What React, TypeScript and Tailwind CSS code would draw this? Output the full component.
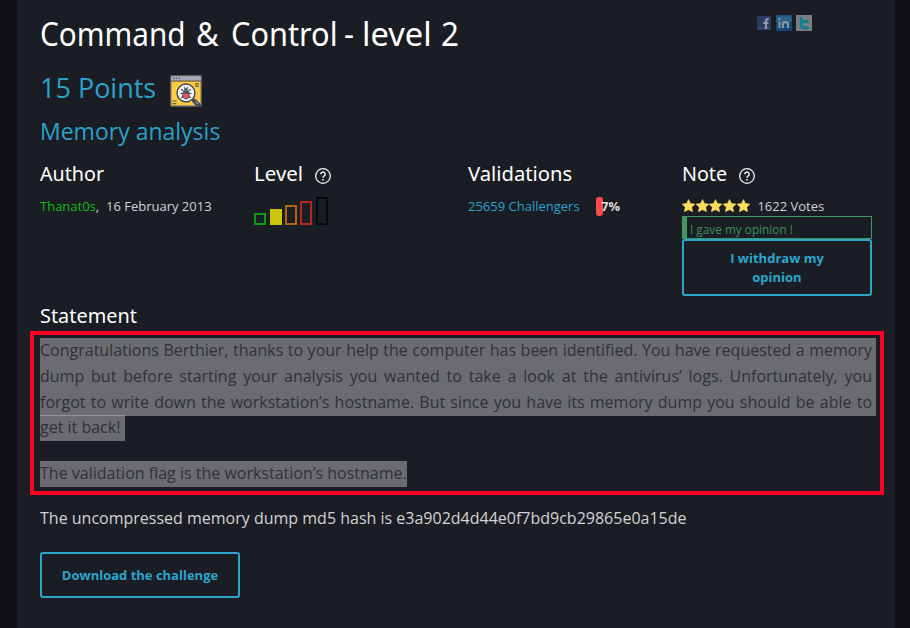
import type { ReactNode } from "react";

function Heading({ children, scale }: { children: string; scale: string }) {
  return <h4 className={`origin-left whitespace-nowrap font-['Noto_Sans'] text-[20.5px] leading-[42px] text-white ${scale}`}>{children}</h4>;
}

function HelpIcon() {
  return (
    <svg width="16" height="16" viewBox="0 0 16 16" fill="none" stroke="#f2f2f2" className="mt-1.5 shrink-0">
      <circle cx="8" cy="8" r="7.3" strokeWidth="1.3" />
      <path d="M5.8 6.3a2.2 2.1 0 1 1 3.5 1.6C8.4 8.4 8 8.7 8 9.8" strokeWidth="1.5" />
      <path d="M8 10.9v1.5" strokeWidth="1.6" />
    </svg>
  );
}

function Star() {
  return (
    <svg width="13.7" height="14" viewBox="0 0 13.7 14" fill="#fbdc5c" className="shrink-0">
      <path d="M6.5.4 8.5 4.5 13 5.1 9.8 8.3 10.6 12.8 6.5 10.7 2.4 12.8 3.2 8.3 0 5.1 4.5 4.5Z" stroke="#fbdc5c" strokeWidth=".5" strokeLinejoin="round" />
    </svg>
  );
}

function BugIcon() {
  return (
    <svg width="32" height="32" viewBox="0 0 32 32" fill="none">
      <rect x=".7" y=".7" width="30.6" height="30.6" rx=".7" fill="#fccb42" stroke="#555866" strokeWidth="1.4" />
      <path d="M1.4 1.4h29.2v4H1.4Z" fill="#a4abbd" />
      <path d="M1 6h30" stroke="#555866" strokeWidth="1.2" />
      <path d="M3 3.1h1.4M5.8 3.1h1.4M8.6 3.1H10" stroke="#4b4f5d" strokeWidth="1.4" />
      <path d="M25 8.8h4M25 11.2h4M2.5 26h4M2.5 28.6h4" stroke="#6b5b43" strokeWidth="1.2" />
      <path d="m22.5 24.5 2 1.8" stroke="#50596a" strokeWidth="2" />
      <path d="m24.5 26.2 4.2 4" stroke="#3d4657" strokeWidth="4.4" strokeLinecap="round" />
      <path d="m25.2 26.2 3 3" stroke="#78899b" strokeWidth="1.6" />
      <circle cx="16" cy="18" r="9" fill="#f1f2f5" stroke="#414856" strokeWidth="1.4" />
      <path d="m11.3 14.2 2 1.6M20.7 14.2l-2 1.6M10.5 18.5h11M11.3 23l2.2-2M20.7 23l-2.2-2M14.3 12.4l1 1.5M17.7 12.4l-1 1.5" stroke="#414856" strokeWidth="1.2" />
      <ellipse cx="16" cy="19.7" rx="3.2" ry="4.2" fill="#ef5362" stroke="#414856" />
      <path d="M12.8 18.7c.2-2 1.2-3.2 3.2-3.2s3 1.2 3.2 3.2Z" fill="#4b5261" />
      <circle cx="16" cy="14.8" r="1.9" fill="#5d6675" />
    </svg>
  );
}

function SocialIcons() {
  return (
    <div className="mt-[15px] flex h-4 items-start">
      <svg width="14" height="14" viewBox="0 0 14 14" className="mt-px">
        <rect width="14" height="14" fill="#2b3a60" />
        <path d="M1 12.2h12" stroke="#46557a" />
        <path d="M11.8 3.2h-1q-1.8 0-1.8 2V13M6.2 7h5.2" fill="none" stroke="#9298a6" strokeWidth="2.2" />
      </svg>
      <svg width="16" height="16" viewBox="0 0 16 16" className="ml-[5px]">
        <rect width="16" height="16" rx="1.5" fill="#164675" />
        <rect x=".5" y=".5" width="15" height="7" rx="1" fill="#286088" />
        <path d="M3.5 6.4V13M3.5 3v2M7 13V6.4M7 9q0-1.8 2.4-1.8T12 9.2V13" fill="none" stroke="#8795a5" strokeWidth="2.2" />
      </svg>
      <svg width="16" height="16" viewBox="0 0 16 16" className="ml-1">
        <rect width="16" height="16" fill="#7b7e82" />
        <path d="M5.2 3v7.3q0 2.5 2.6 2.5H11.5M5.2 6.7H11.5" fill="none" stroke="#177f8f" strokeWidth="3.2" strokeLinecap="round" strokeLinejoin="round" />
      </svg>
    </div>
  );
}

function Line({ children }: { children: ReactNode }) {
  return <div className="h-[26px] w-[836px] bg-[#6b6c70] pr-1 leading-6 [text-align-last:justify] whitespace-nowrap">{children}</div>;
}

export default function App() {
  return (
    <div className="h-[628px] overflow-hidden bg-[#0f1013] px-[17px] pr-[15px] font-['Open_Sans',sans-serif] text-[#d3d3d3]">
      <main className="h-full bg-[#1a1d24] pl-[23px]">
        <div className="w-[832px]">
          <header className="flex h-16 justify-between pr-[60px]">
            <h1 className="flex whitespace-pre font-['Noto_Sans'] text-[33px] leading-[67px] text-white">
              <span className="w-[156px] origin-left scale-x-[0.9]">Command </span>
              <span className="w-[35px] origin-left scale-x-[0.94]">&amp; </span>
              <span className="w-[113px] origin-left scale-x-[0.93]">Control </span>
              <span className="w-[18px] origin-left scale-x-[0.94]">- </span>
              <span className="w-[79px] origin-left scale-x-[0.99]">level </span>
              <span className="w-4 origin-left scale-x-[0.95]">2</span>
            </h1>
            <SocialIcons />
          </header>
          <div className="flex h-[46px] items-center text-[#2ba1cb]">
            <h2 className="w-[130px] whitespace-nowrap pt-0.5 text-[27px] leading-[46px]">15 Points</h2>
            <div className="pt-2"><BugIcon /></div>
          </div>
          <h3 className="text-[23px] leading-[42px] text-[#2ba1cb]">Memory analysis</h3>

          <section className="grid h-36 grid-cols-[190px_190px_190px_190px] gap-6 text-[13px] leading-6">
            <div>
              <Heading scale="scale-x-[0.96]">Author</Heading>
              <p className="whitespace-nowrap"><span className="text-[#12bb12]">Thanat0s</span>,&nbsp; 16 February 2013</p>
            </div>
            <div>
              <div className="flex items-center"><div className="w-[61px]"><Heading scale="scale-x-100">Level</Heading></div><HelpIcon /></div>
              <div className="mt-[3px] flex h-7 items-end">
                <i className="h-3 w-3 border-2 border-[#0b9d0e]" />
                <i className="ml-1 h-4 w-3 bg-[#c9c50b]" />
                <i className="ml-[3px] h-5 w-3 border-2 border-[#b16213]" />
                <i className="ml-[3px] h-6 w-3 border-2 border-[#b42817]" />
                <i className="ml-1 h-7 w-3 border-2 border-[#08090b]" />
              </div>
            </div>
            <div>
              <Heading scale="scale-x-[0.985]">Validations</Heading>
              <div className="flex h-6 items-start whitespace-nowrap">
                <span className="text-[#2ba1cb]">25659 Challengers</span>
                <span className="mt-[3px] ml-4 h-[19px] w-[7px] rounded-[3px] bg-[#fe4b4b]" />
                <b className="-ml-[1.5px] text-[12.8px] text-[#dedede]">7%</b>
              </div>
            </div>
            <div>
              <div className="flex items-center"><div className="w-[57px]"><Heading scale="scale-x-[0.96]">Note</Heading></div><HelpIcon /></div>
              <div className="flex h-[22px] items-start">
                <div className="flex pt-[5px]"><Star /><Star /><Star /><Star /><Star /></div>
                <span className="ml-[7px]">1622 Votes</span>
              </div>
              <div className="h-[23px] border border-l-[5px] border-[#43965d] pl-[3px] text-[11.8px] leading-[25px] text-[#3b9359]">I gave my opinion !</div>
              <button className="block h-[57px] w-[190px] rounded-[3px] border-2 border-[#2ba6cb] px-8 text-[13px] leading-[19px] font-bold text-[#2ba6cb]">I withdraw my opinion</button>
            </div>
          </section>

          <div className="h-[35px] pt-px"><h4 className="origin-left scale-x-[0.97] font-['Noto_Sans'] text-[20.5px] leading-[37px] text-white">Statement</h4></div>
          <section className="-ml-2.5 h-[164px] w-[854px] border-4 border-[#ff0023] pt-[3px] pl-1.5 text-base leading-6 text-[#303135]">
            <Line>Congratulations Berthier, thanks to your help the computer has been identified. You have requested a memory</Line>
            <Line>dump but before starting your analysis you wanted to take a look at the antivirus’ logs. Unfortunately, you</Line>
            <Line>forgot to write down the workstation’s hostname. But since you have its memory dump you should be able to</Line>
            <div className="-mt-px h-[26px] w-[85px] border-t border-[#929396] bg-[#6b6c70] leading-[23px]">get it back!</div>
            <div className="mt-5 h-[26px] w-[367px] bg-[#6b6c70] whitespace-nowrap">The validation flag is the workstation’s hostname.</div>
          </section>
          <p className="text-base leading-[46px]">The uncompressed memory dump md5 hash is e3a902d4d44e0f7bd9cb29865e0a15de</p>
          <button className="mt-[11px] block h-[46px] w-[200px] rounded-[3px] border-2 border-[#2ba6cb] pt-0.5 text-[13px] font-bold text-[#2ba6cb]">Download the challenge</button>
        </div>
      </main>
    </div>
  );
}
